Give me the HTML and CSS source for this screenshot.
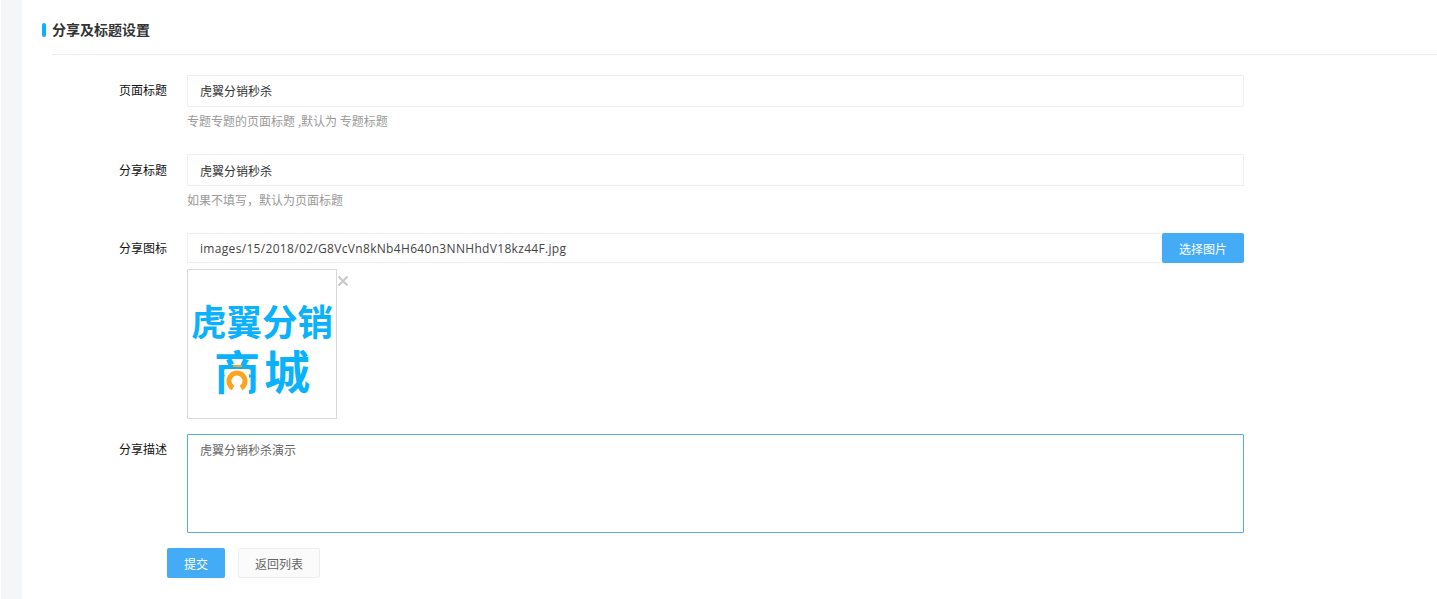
FILE: index.html
```html
<!DOCTYPE html>
<html lang="zh-CN">
<head>
<meta charset="utf-8">
<title>分享及标题设置</title>
<link rel="stylesheet" href="styles.css">
</head>
<body>
<div class="page">
  <aside class="rail"></aside>
  <main class="content">
    <h2 class="section-title"><span class="section-mark"></span>分享及标题设置</h2>
    <form class="form">
      <div class="row row-title">
        <label class="label">页面标题</label>
        <div class="field">
          <input class="input" type="text" value="虎翼分销秒杀">
          <p class="help">专题专题的页面标题 ,默认为 专题标题</p>
        </div>
      </div>
      <div class="row row-share">
        <label class="label">分享标题</label>
        <div class="field">
          <input class="input" type="text" value="虎翼分销秒杀">
          <p class="help">如果不填写，默认为页面标题</p>
        </div>
      </div>
      <div class="row row-icon">
        <label class="label">分享图标</label>
        <div class="field">
          <div class="picker">
            <input class="input input-path" type="text" value="images/15/2018/02/G8VcVn8kNb4H640n3NNHhdV18kz44F.jpg">
            <button class="btn btn-primary btn-pick" type="button">选择图片</button>
          </div>
          <div class="thumb-wrap">
            <div class="thumb">
              <svg class="logo" viewBox="0 0 148 148" width="148" height="148">
                <text class="logo-text logo-text-top" x="3" y="66" textLength="142" lengthAdjust="spacingAndGlyphs">虎翼分销</text>
                <text class="logo-text logo-text-bottom" x="26" y="119">商</text>
                <text class="logo-text logo-text-bottom" x="76" y="119">城</text>
                <rect x="37" y="99" width="24" height="27" fill="#fff"/>
                <rect x="45" y="95" width="9" height="2" fill="#fca41e"/>
                <path d="M45 118A8 8 0 1 1 53 118" fill="none" stroke="#fca41e" stroke-width="5"/>
              </svg>
            </div>
            <svg class="thumb-close" viewBox="0 0 12 12" width="12" height="12"><path d="M1.500 1.500L10.500 10.500M10.500 1.500L1.500 10.500" stroke="#c8c8c8" stroke-width="2" fill="none"/></svg>
          </div>
        </div>
      </div>
      <div class="row row-desc">
        <label class="label">分享描述</label>
        <div class="field">
          <textarea class="textarea">虎翼分销秒杀演示</textarea>
        </div>
      </div>
      <div class="actions">
        <button class="btn btn-primary btn-submit" type="button">提交</button>
        <button class="btn btn-default" type="button">返回列表</button>
      </div>
    </form>
  </main>
</div>
</body>
</html>
```
FILE: styles.css
```css
* { box-sizing: border-box; }
html, body { margin: 0; padding: 0; height: 100%; overflow: hidden; background: #fff; }
body { font-family: "Noto Sans CJK SC", "Liberation Sans", sans-serif; font-size: 12px; color: #333; }
.page { display: flex; height: 599px; }
.rail { width: 21px; margin-left: 1px; background: #f5f6f8; flex: none; }
.content { flex: 1; min-width: 0; padding-top: 19px; }
.section-title { position: relative; margin: 0 0 20px 30px; padding: 0 0 15px; height: 36px; line-height: 20px; font-size: 14px; font-weight: 700; color: #333; border-bottom: 1px solid #eee; }
.section-mark { position: absolute; left: -10px; top: 4px; width: 4px; height: 14px; border-radius: 2px; background: #0ab1fc; }
.form { display: block; }
.row { display: flex; }
.label { width: 145px; flex: none; text-align: right; line-height: 30px; color: #111; font-size: 12px; }
.field { width: 1057px; margin-left: 20px; flex: none; }
.input { display: block; width: 100%; height: 32px; padding: 0 12px 2px; border: 1px solid #eee; border-radius: 1px; background: #fff; font: inherit; font-size: 12px; color: #333; outline: none; }
.help { margin: 5px 0 0; line-height: 18px; color: #9a9a9a; font-size: 12px; }
.row-title { height: 79px; }
.row-share { height: 79px; }
.row-share .label { padding-top: 1px; }
.row-share .input { padding-bottom: 0; }
.row-icon { height: 201px; }
.picker { display: flex; height: 30px; }
.input-path { flex: 1; min-width: 0; height: 30px; border-right: 0; font-family: "Open Sans", "Noto Sans CJK SC", sans-serif; letter-spacing: 0.32px; padding-bottom: 0; color: #444; }
.btn { font: inherit; font-size: 12px; height: 30px; border-radius: 2px; cursor: pointer; padding: 0; }
.btn-primary { border: 0; background: #44abf7; color: #fff; }
.btn-pick { width: 82px; flex: none; }
.thumb-wrap { display: flex; margin-top: 6px; align-items: flex-start; }
.thumb { width: 150px; height: 150px; border: 1px solid #d9d9d9; background: #fff; flex: none; }
.logo { display: block; }
.logo-text { fill: #0ab1fc; font-weight: 700; }
.logo-text-top { font-size: 36px; }
.logo-text-bottom { font-size: 46px; }
.thumb-close { margin-top: 6px; flex: none; }
.row-desc { height: 114px; }
.textarea { display: block; width: 100%; height: 99px; padding: 6px 12px; border: 1px solid #5ba9e5; border-radius: 1px; background: #fff; font: inherit; font-size: 12px; line-height: 18px; color: #666; outline: none; resize: none; }
.actions { display: flex; gap: 13px; padding-left: 145px; }
.btn-submit { width: 58px; }
.btn-default { width: 82px; background: #fbfbfb; border: 1px solid #eee; color: #666; }
```
